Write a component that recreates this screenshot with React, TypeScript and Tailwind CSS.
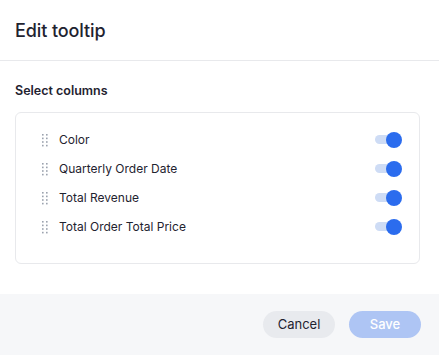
const columns = ["Color", "Quarterly Order Date", "Total Revenue", "Total Order Total Price"];

function DragHandle() {
  return (
    <svg width="6" height="14" viewBox="0 0 6 14" className="shrink-0">
      {[0, 1, 2, 3].map((r) =>
        [0, 1].map((c) => (
          <rect key={`${r}-${c}`} x={c * 4} y={1 + r * 3.6} width="1.6" height="1.6" fill="#9ca3af" />
        ))
      )}
    </svg>
  );
}

function Toggle() {
  return (
    <div className="relative w-[27px] h-[16px] flex items-center">
      <div className="h-[9px] w-[24px] rounded-full bg-[#cedcf5]" />
      <div className="absolute right-0 top-0 w-[16px] h-[16px] rounded-full bg-[#2b6cee]" />
    </div>
  );
}

export default function App() {
  return (
    <div className="w-[439px] h-[355px] bg-white flex flex-col text-[#1f2330]" style={{ fontFamily: "Inter, 'Noto Sans', sans-serif" }}>
      <div className="h-[61px] border-b border-[#e8e9ec] flex items-center px-[15px]">
        <h1 className="text-[18px] font-medium tracking-[-0.1px]">Edit tooltip</h1>
      </div>
      <div className="pl-[15px] pr-[19px] pt-[21px]">
        <p className="text-[12.5px] font-semibold leading-[18px]">Select columns</p>
        <div className="mt-[12px] rounded-[6px] border border-[#e8e9ec] pt-[12px] pb-[22px] pl-[26px] pr-[17px]">
          {columns.map((c) => (
            <div key={c} className="h-[29px] flex items-center">
              <DragHandle />
              <span className="ml-[11px] text-[12px] leading-[16px] pt-[1px] flex-1">{c}</span>
              <Toggle />
            </div>
          ))}
        </div>
      </div>
      <div className="mt-auto h-[61px] bg-[#f6f7f9] flex items-center justify-end gap-[14px] pr-[18px]">
        <button className="h-[27px] w-[72px] rounded-full bg-[#e8eaee] text-[13px] text-[#1f2330]">Cancel</button>
        <button className="h-[27px] w-[72px] rounded-full bg-[#aec5f4] text-[13px] text-white font-medium">Save</button>
      </div>
    </div>
  );
}
